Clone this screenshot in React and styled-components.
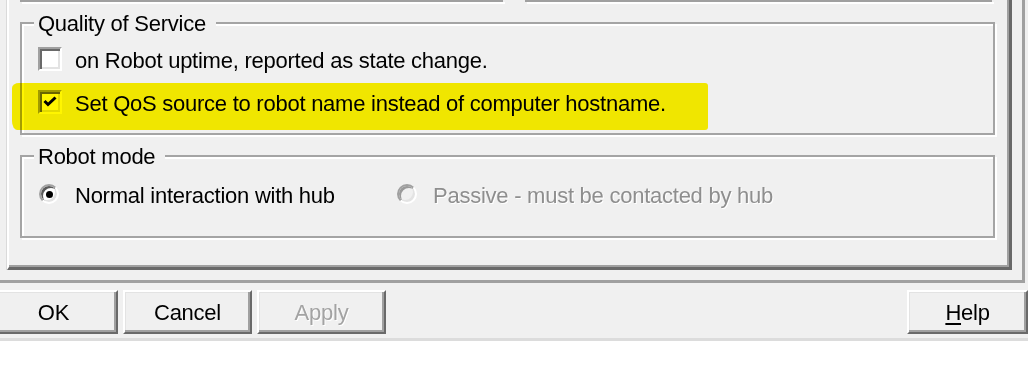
import React from "react";
import styled, { createGlobalStyle } from "styled-components";

const GlobalStyle = createGlobalStyle`
  html, body {
    margin: 0;
    padding: 0;
    background: #fff;
    overflow: hidden;
  }
  body {
    font-family: "Liberation Sans", Arial, sans-serif;
    font-size: 22px;
    letter-spacing: -0.25px;
    color: #000;
  }
`;

const Dialog = styled.div`
  width: 1028px;
  height: 338px;
  background: #f0f0f0;
  border-bottom: 3px solid #dcdcdc;
  display: flex;
  flex-direction: column;
  overflow: hidden;
`;

const Sheet = styled.div`
  box-sizing: border-box;
  width: 1025px;
  height: 283px;
  padding-left: 7px;
  border-right: 3px solid #a0a0a0;
  border-bottom: 3px solid #a0a0a0;
  flex-shrink: 0;
`;

const Page = styled.div`
  box-sizing: border-box;
  width: 1005px;
  height: 270px;
  padding: 0 14px 0 11px;
  border-left: 2px solid #fff;
  border-right: 3px solid #696969;
  border-bottom: 3px solid #696969;
  box-shadow: inset -2px -2px 0 #a0a0a0, -1px 0 0 #dadada;
  display: flex;
  flex-direction: column;
`;

/* bottoms of the group boxes that sit above the visible part */
const TopRow = styled.div`
  display: grid;
  grid-template-columns: 483px 467px;
  column-gap: 22px;
`;

const BoxStub = styled.div`
  height: 0;
  border: 2px solid #a0a0a0;
  border-top: none;
  box-shadow: 2px 2px 0 #fff, inset 2px 0 0 #fff;
`;

const Group = styled.fieldset`
  margin: 7px 0 0;
  padding: ${(p) => p.$padTop}px 16px ${(p) => p.$padBottom}px;
  min-inline-size: 0;
  border: 2px solid #a4a4a4;
  box-shadow: 2px 2px 0 #fff, inset 2px 2px 0 #fff;
  display: flex;
  flex-direction: column;
  gap: 19px;
`;

const Caption = styled.legend`
  margin-left: -4px;
  padding: 3px 10px 0 4px;
  line-height: 24px;
  background: #f0f0f0;
`;

const Row = styled.div`
  position: relative;
  display: flex;
  align-items: center;
  gap: 13px;
  height: 24px;
  white-space: nowrap;
`;

const RadioRow = styled.div`
  display: grid;
  grid-template-columns: 358px auto;
  height: 24px;
`;

const Label = styled.span`
  padding-top: 3px;
  line-height: 24px;
  color: ${(p) => (p.$disabled ? "#8e8e8e" : "#000")};
  text-shadow: ${(p) => (p.$disabled ? "1px 1px 0 #fff" : "none")};
`;

const CheckBox = styled.span`
  box-sizing: border-box;
  width: 24px;
  height: 24px;
  flex-shrink: 0;
  display: flex;
  align-items: center;
  justify-content: center;
  background: #fff;
  border: 2px solid;
  border-color: #a0a0a0 #fff #fff #a0a0a0;
  box-shadow: inset 2px 2px 0 #696969, inset -2px -2px 0 #e3e3e3;
`;

const Radio = styled.span`
  box-sizing: border-box;
  width: 20px;
  height: 20px;
  margin: 0 3px 0 1px;
  flex-shrink: 0;
  border-radius: 50%;
  display: flex;
  align-items: center;
  justify-content: center;
  background: ${(p) => (p.$disabled ? "#f0f0f0" : "#fff")};
  border: 2px solid;
  border-color: #a0a0a0 #fff #fff #a0a0a0;
  box-shadow: inset 2px 2px 0 ${(p) => (p.$disabled ? "#9a9a9a" : "#5a5a5a")},
    inset -2px -2px 0 #e3e3e3;
`;

const Dot = styled.span`
  width: 7px;
  height: 7px;
  border-radius: 50%;
  background: #000;
`;

/* the yellow marker someone drew over the screenshot */
const Marker = styled.span`
  position: absolute;
  left: -26px;
  top: -7px;
  width: 696px;
  height: 47px;
  background: #fff500;
  mix-blend-mode: multiply;
  border-radius: 7px 3px 3px 5px / 5px 3px 3px 9px;
  filter: blur(0.7px);
  pointer-events: none;
`;

const ButtonBar = styled.div`
  display: flex;
  gap: 5px;
  width: 1039px;
  margin: 7px 0 0 -11px;
`;

const Button = styled.button`
  box-sizing: border-box;
  width: ${(p) => p.$w || 129}px;
  height: 44px;
  margin-left: ${(p) => (p.$push ? "auto" : "0")};
  padding: 2px 0 0;
  font: inherit;
  letter-spacing: inherit;
  line-height: 24px;
  color: ${(p) => (p.disabled ? "#a3a3a3" : "#000")};
  text-shadow: ${(p) => (p.disabled ? "1px 1px 0 #fff" : "none")};
  background: #f0f0f0;
  border: 2px solid;
  border-color: #fff #696969 #696969 #fff;
  box-shadow: inset -2px -2px 0 #a0a0a0, inset 1px 1px 0 #e3e3e3;

  & u {
    text-decoration-thickness: 2px;
    text-underline-offset: 3px;
  }
`;

const Check = () => (
  <svg width="14" height="12" viewBox="0 0 14 12">
    <path d="M1.5 5 L5 8.5 L12.5 1.5" fill="none" stroke="#000" strokeWidth="3" />
  </svg>
);

export default function App() {
  return (
    <>
      <GlobalStyle />
      <Dialog>
        <Sheet>
          <Page>
            <TopRow>
              <BoxStub />
              <BoxStub />
            </TopRow>

            <Group $padTop={11} $padBottom={19}>
              <Caption>Quality of Service</Caption>
              <Row>
                <CheckBox />
                <Label>on Robot uptime, reported as state change.</Label>
              </Row>
              <Row>
                <CheckBox>
                  <Check />
                </CheckBox>
                <Label>Set QoS source to robot name instead of computer hostname.</Label>
                <Marker />
              </Row>
            </Group>

            <Group $padTop={13} $padBottom={30}>
              <Caption>Robot mode</Caption>
              <RadioRow>
                <Row>
                  <Radio>
                    <Dot />
                  </Radio>
                  <Label>Normal interaction with hub</Label>
                </Row>
                <Row>
                  <Radio $disabled />
                  <Label $disabled>Passive - must be contacted by hub</Label>
                </Row>
              </RadioRow>
            </Group>
          </Page>
        </Sheet>

        <ButtonBar>
          <Button>OK</Button>
          <Button>Cancel</Button>
          <Button disabled>Apply</Button>
          <Button $push $w={121}>
            <u>H</u>elp
          </Button>
        </ButtonBar>
      </Dialog>
    </>
  );
}
